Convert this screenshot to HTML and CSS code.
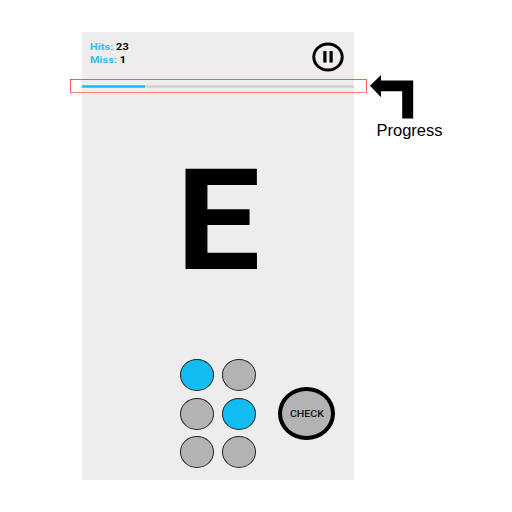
FILE: index.html
```html
<!DOCTYPE html>
<html lang="en">
<head>
<meta charset="utf-8">
<title>Braille practice</title>
<link rel="stylesheet" href="styles.css">
</head>
<body>
<main class="screen">
  <header class="top">
    <div class="stats">
      <div><span class="label">Hits:</span> 23</div>
      <div><span class="label">Miss:</span> 1</div>
    </div>
    <svg class="pause" viewBox="0 0 32 30" role="img" aria-label="Pause">
      <ellipse cx="16" cy="15" rx="14.2" ry="13.1" fill="none" stroke="#000" stroke-width="3"/>
      <path d="M11.3 9h3.2v11.5h-3.2zM17.5 9h3.2v11.5h-3.2z"/>
    </svg>
  </header>
  <div class="progress"><div class="bar"></div></div>
  <div class="letter"><span>E</span></div>
  <div class="controls">
    <div class="dots">
      <i class="dot on"></i><i class="dot"></i>
      <i class="dot"></i><i class="dot on"></i>
      <i class="dot"></i><i class="dot"></i>
    </div>
    <button class="check"><span>CHECK</span></button>
  </div>
</main>
<div class="outline"></div>
<div class="callout">
  <svg class="arrow" viewBox="0 0 44 44"><path d="M0 10.8 11 0v5.5h32.2v38H32.2V16.2H11v6z"/></svg>
  <span>Progress</span>
</div>
</body>
</html>
```
FILE: styles.css
```css
* { box-sizing: border-box; }
body {
  position: relative;
  margin: 0;
  width: 512px;
  height: 512px;
  overflow: hidden;
  background: #fff;
  padding: 32px 0 0 82.4px;
  font-family: Roboto, sans-serif;
  color: #000;
}
.screen {
  width: 271.2px;
  height: 448px;
  background: #ededed;
  display: flex;
  flex-direction: column;
}
.top {
  flex: none;
  height: 53px;
  display: flex;
  justify-content: space-between;
  padding: 7.5px 10px 0 7.6px;
}
.stats {
  font-size: 9.7px;
  font-weight: 700;
  line-height: 13.4px;
  letter-spacing: 0.1px;
  transform: translateY(0.2px) scaleX(1.115);
  transform-origin: 0 0;
}
.stats div { white-space: pre; }
.label { color: #2cc0ec; }
.pause { width: 32px; height: 30px; margin-top: 2px; }
.progress {
  flex: none;
  height: 3px;
  background: linear-gradient(#d8d8d8 1px, #cdcdcd 1px 2px, #d8d8d8 2px);
}
.bar {
  width: 62.6px;
  height: 100%;
  background: linear-gradient(#4fcbf1 1px, #10bcf2 1px 2px, #4fcbf1 2px);
}
.letter {
  flex: none;
  height: 271px;
  padding: 33px 0 0 93.6px;
  font-size: 140.6px;
  font-weight: 700;
  line-height: 201px;
}
.letter span {
  display: inline-block;
  transform: scaleX(1.065);
  transform-origin: 0 0;
}
.controls {
  display: flex;
  align-items: center;
  padding-left: 97.8px;
}
.dots {
  display: grid;
  grid-template-columns: 34.2px 34.2px;
  grid-auto-rows: 32px;
  gap: 6.5px 7.3px;
  margin-right: 22px;
}
.dot {
  border: 1px solid #222;
  border-radius: 50%;
  background: #b3b3b3;
}
.on { background: #10bcf2; }
.check {
  flex: none;
  width: 57px;
  height: 53px;
  padding: 0;
  border: 4px solid #000;
  border-radius: 50%;
  background: #b3b3b3;
  font: 500 9.9px Roboto, sans-serif;
  color: #111;
}
.check span { display: inline-block; transform: scaleX(1.07); }
.outline {
  position: absolute;
  left: 70px;
  top: 79px;
  width: 297px;
  height: 14px;
  border: 1px solid #ff5a5a;
  border-bottom-color: #ff8080;
}
.callout {
  position: absolute;
  left: 370px;
  top: 75px;
  display: flex;
  flex-direction: column;
  font: 16.5px/19px "Liberation Sans", sans-serif;
}
.arrow { width: 44px; height: 44px; }
.callout span { margin: 2px 0 0 6.5px; }
```
